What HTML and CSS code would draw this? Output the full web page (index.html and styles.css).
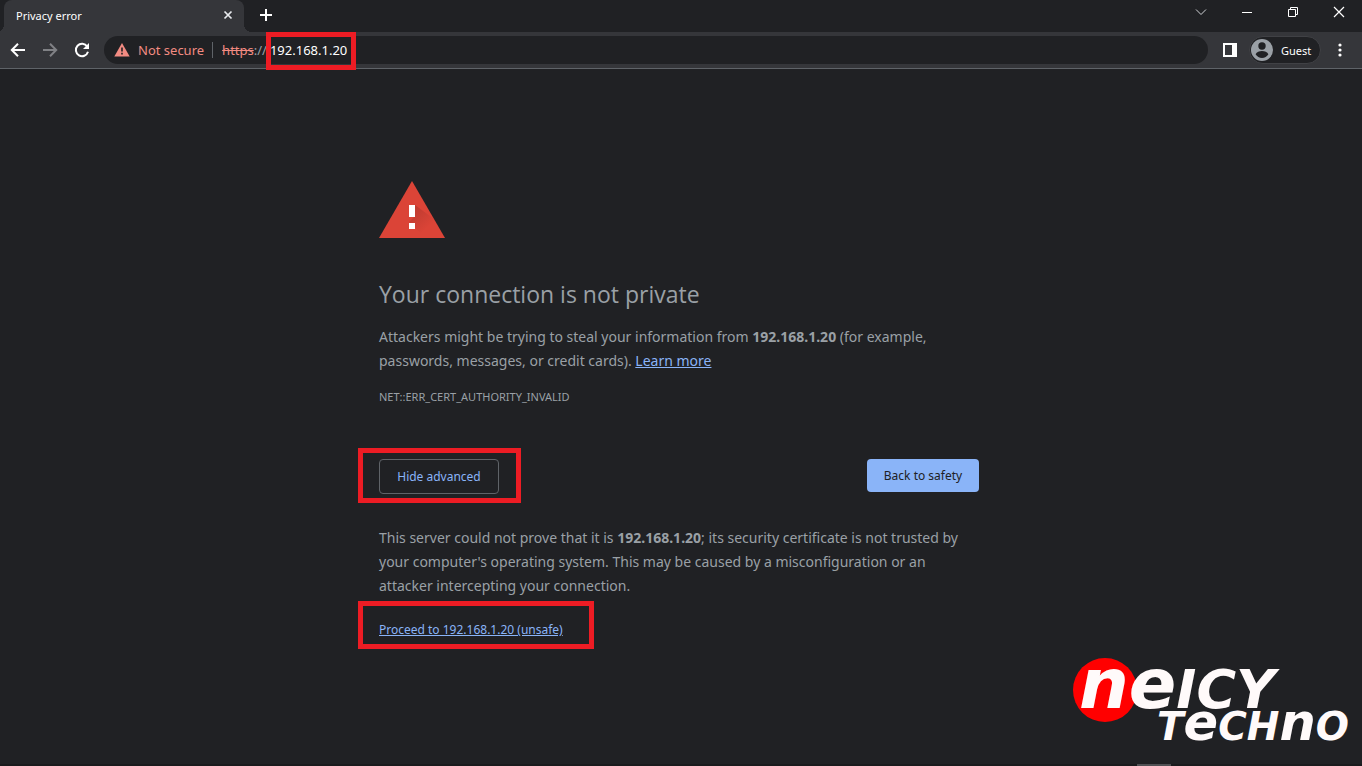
FILE: index.html
```html
<!DOCTYPE html>
<html lang="en">
<head>
  <meta charset="UTF-8">
  <title>Privacy error</title>
  <meta name="viewport" content="width=device-width, initial-scale=1.0">
  <link rel="stylesheet" href="styles.css">
</head>
<body>
  <header class="browser">
    <div class="tab-strip">
      <div class="tab">
        <span>Privacy error</span>
        <button type="button" class="icon-btn" aria-label="Close tab">
          <svg width="16" height="16" viewBox="0 0 16 16"><path d="M4.500 4.500l7 7M11.500 4.500l-7 7" stroke="#e8eaed" stroke-width="1.700"/></svg>
        </button>
      </div>
      <button type="button" class="icon-btn new-tab" aria-label="New tab">
        <svg width="16" height="16" viewBox="0 0 16 16"><path d="M8 2v12M2 8h12" stroke="#fff" stroke-width="2"/></svg>
      </button>
      <div class="window-controls">
        <button type="button" class="icon-btn" aria-label="Search tabs">
          <svg width="16" height="16" viewBox="0 0 16 16"><path d="M3 5.500l5 5 5-5" fill="none" stroke="#d0d2d6"/></svg>
        </button>
        <button type="button" class="icon-btn" aria-label="Minimize">
          <svg width="16" height="16" viewBox="0 0 16 16"><path d="M3 8.500h10" stroke="#fff"/></svg>
        </button>
        <button type="button" class="icon-btn" aria-label="Restore">
          <svg width="16" height="16" viewBox="0 0 16 16"><path d="M3.500 5.500h7v7h-7zM5.500 5.500v-2h7v7h-2" fill="none" stroke="#fff"/></svg>
        </button>
        <button type="button" class="icon-btn" aria-label="Close window">
          <svg width="16" height="16" viewBox="0 0 16 16"><path d="M3 3l10 10M13 3L3 13" stroke="#fff" stroke-width="1.200"/></svg>
        </button>
      </div>
    </div>

    <div class="toolbar">
      <nav class="nav-buttons">
        <button type="button" class="icon-btn" aria-label="Back">
          <svg width="16" height="16" viewBox="0 0 16 16"><path d="M15 8H2.500M8 1.800L1.800 8 8 14.200" fill="none" stroke="#fff" stroke-width="2"/></svg>
        </button>
        <button type="button" class="icon-btn" aria-label="Forward">
          <svg width="16" height="16" viewBox="0 0 16 16"><path d="M1 8h12.500M8 1.800L14.200 8 8 14.200" fill="none" stroke="#808185" stroke-width="2"/></svg>
        </button>
        <button type="button" class="icon-btn" aria-label="Reload">
          <svg width="16" height="16" viewBox="0 0 16 16"><path d="M13.200 4.500A6.200 6.200 0 1 0 14 9.800" fill="none" stroke="#fff" stroke-width="2"/><path d="M15 1v6H9z" fill="#fff"/></svg>
        </button>
      </nav>
      <div class="address-bar">
        <svg width="16" height="14" viewBox="0 0 16 14"><path d="M8 0l7.700 13.500H.3z" fill="#f28b82"/><path d="M8 4.500v4M8 9.800v1.700" stroke="#202124" stroke-width="1.600"/></svg>
        <span class="not-secure">Not secure</span>
        <label for="url" class="scheme"><s>https</s>://</label>
        <div class="marked mark-url">
          <input type="text" id="url" value="192.168.1.20">
        </div>
      </div>
      <button type="button" class="icon-btn" aria-label="Side panel">
        <svg width="16" height="16" viewBox="0 0 16 16"><path d="M1 1h14v14H1zM3 3v10h7V3z" fill="#fff" fill-rule="evenodd"/></svg>
      </button>
      <button type="button" class="profile">
        <svg width="22" height="22" viewBox="0 0 22 22"><circle cx="11" cy="11" r="11" fill="#9aa0a6"/><circle cx="11" cy="7" r="3.700" fill="#202124"/><path d="M4.600 15.200c1.200-2 3.600-3.100 6.400-3.100s5.200 1.100 6.400 3.100c-1.400 2.300-3.700 3.700-6.400 3.700s-5-1.400-6.400-3.700z" fill="#202124"/></svg>
        Guest
      </button>
      <button type="button" class="icon-btn" aria-label="Menu">
        <svg width="16" height="16" viewBox="0 0 16 16" fill="#fff"><circle cx="8" cy="3" r="1.600"/><circle cx="8" cy="8" r="1.600"/><circle cx="8" cy="13" r="1.600"/></svg>
      </button>
    </div>
  </header>

  <main>
    <div class="warning">
      <svg class="warning-icon" width="66" height="58" viewBox="0 0 66 58">
        <defs>
          <linearGradient id="shade" x1="0" y1="0" x2="1" y2="1">
            <stop offset="0" stop-color="#a8342b" stop-opacity=".7"/>
            <stop offset=".6" stop-color="#a8342b" stop-opacity="0"/>
          </linearGradient>
        </defs>
        <path d="M33 1l33 57H0z" fill="#db4437"/>
        <path d="M36 25l19 14 11 19H47L30 42l6-6z" fill="url(#shade)"/>
        <path d="M30 25h6v12h-6zM30 43h6v6h-6z" fill="#fff"/>
      </svg>
      <h1>Your connection is not private</h1>
      <p>Attackers might be trying to steal your information from <strong>192.168.1.20</strong> (for example, passwords, messages, or credit cards). <a href="#">Learn more</a></p>
      <div class="error-code">NET::ERR_CERT_AUTHORITY_INVALID</div>

      <div class="buttons">
        <div class="marked mark-advanced">
          <button type="button" class="btn btn-secondary">Hide advanced</button>
        </div>
        <button type="button" class="btn btn-primary">Back to safety</button>
      </div>

      <p>This server could not prove that it is <strong>192.168.1.20</strong>; its security certificate is not trusted by your computer's operating system. This may be caused by a misconfiguration or an attacker intercepting your connection.</p>
      <div class="marked mark-proceed">
        <a href="#" class="proceed">Proceed to 192.168.1.20 (unsafe)</a>
      </div>
    </div>
  </main>

  <div class="logo">
    <svg width="284" height="120" viewBox="0 -20 284 120">
      <circle cx="32" cy="35" r="32" fill="#f00"/>
      <g fill="#fffafa">
        <text x="6" y="53" class="logo-top"><tspan class="tall">ne</tspan>ICY</text>
        <text x="84" y="85" class="logo-bottom">T<tspan class="tall">e</tspan>CH<tspan class="tall">n</tspan>O</text>
      </g>
    </svg>
  </div>

  <footer class="taskbar"><span></span></footer>
</body>
</html>
```

FILE: styles.css
```css
* {
  box-sizing: border-box;
}

body {
  margin: 0;
  min-height: 100vh;
  display: flex;
  flex-direction: column;
  position: relative;
  background: #202124;
  color: #9aa0a6;
  font-family: "Noto Sans", "Open Sans", sans-serif;
  font-size: 13px;
}

button, input {
  font-family: inherit;
  border: none;
  background: none;
  padding: 0;
  cursor: pointer;
}

svg {
  display: block;
  flex: none;
}

/* Browser frame */
.tab-strip {
  display: flex;
  align-items: center;
  height: 32px;
  padding-left: 4px;
}
.tab {
  position: relative;
  display: flex;
  align-items: center;
  justify-content: space-between;
  width: 240px;
  height: 32px;
  padding: 0 8px 2px 12px;
  border-radius: 8px 8px 0 0;
  background: #35363a;
  color: #fff;
  font-size: 11px;
}
.tab::before,
.tab::after {
  content: "";
  position: absolute;
  bottom: 0;
  width: 8px;
  height: 8px;
}
.tab::before {
  right: 100%;
  background: radial-gradient(circle at 0 0, transparent 8px, #35363a 8px);
}
.tab::after {
  left: 100%;
  background: radial-gradient(circle at 100% 0, transparent 8px, #35363a 8px);
}
.new-tab {
  margin-left: 14px;
  padding-bottom: 2px;
}
.window-controls {
  display: flex;
  gap: 30px;
  margin-left: auto;
  padding: 0 15px 8px 0;
}
.toolbar {
  display: flex;
  align-items: center;
  height: 37px;
  padding: 0 14px 0 10px;
  background: #35363a;
  border-bottom: 1px solid #5f6368;
}
.nav-buttons {
  display: flex;
  gap: 16px;
  margin-right: 14px;
}
.address-bar {
  display: flex;
  align-items: center;
  flex: 1;
  height: 28px;
  margin-right: 14px;
  padding-left: 10px;
  border-radius: 14px;
  background: #202124;
}
.not-secure {
  margin: 0 9px 0 8px;
  padding-right: 8px;
  border-right: 1px solid #5f6368;
  line-height: 16px;
  color: #f28b82;
}
.scheme {
  margin-right: 3px;
  color: #9aa0a6;
}
.scheme s {
  color: #f28b82;
}
.address-bar input {
  display: block;
  width: 84px;
  height: 28px;
  color: #fff;
  font-size: 13px;
  outline: none;
}
.profile {
  display: flex;
  align-items: center;
  gap: 8px;
  min-width: 72px;
  height: 28px;
  margin: 0 11px;
  padding: 0 8px 0 1px;
  border: 1px solid #404145;
  border-radius: 14px;
  background: #202124;
  color: #fff;
  font-size: 11px;
}

/* Warning page */
main {
  flex: 1;
  padding: 111px 4px 32px 0;
}
.warning {
  max-width: 600px;
  margin: 0 auto;
}
h1 {
  margin: 40px 0 15px;
  font-family: "Open Sans", sans-serif;
  font-size: 23px;
  font-weight: 400;
  line-height: 32px;
}
p {
  margin: 0;
  font-size: 14px;
  line-height: 24px;
}
a {
  color: #8ab4f8;
}
.error-code {
  margin-top: 14px;
  font-size: 11px;
  line-height: 20px;
}
.buttons {
  display: flex;
  justify-content: space-between;
  align-items: flex-start;
  margin: 52px 0 32px;
}
.btn {
  height: 33px;
  border-radius: 4px;
  font-size: 12px;
}
.btn-secondary {
  width: 120px;
  height: 35px;
  border: 1px solid #5f6368;
  color: #8ab4f8;
}
.btn-primary {
  width: 112px;
  background: #8ab4f8;
  color: #202124;
}
.proceed {
  font-size: 12px;
  line-height: 20px;
}

/* Red frames around the steps */
.marked {
  position: relative;
}
.marked::after {
  content: "";
  position: absolute;
  border: 5px solid #ed1c24;
  pointer-events: none;
}
.mark-url::after {
  inset: -4px -2px -6px -4px;
}
.mark-advanced::after {
  inset: -11px -22px -9px -21px;
}
.mark-proceed {
  width: fit-content;
  margin-top: 22px;
}
.mark-proceed::after {
  inset: -19px -31px -9px -21px;
}

.logo {
  position: absolute;
  right: 5px;
  bottom: 11px;
}
.logo text {
  font-family: "DejaVu Sans", sans-serif;
  font-weight: 700;
  font-style: italic;
}
.logo-top {
  font-size: 54px;
}
.logo-top .tall {
  font-size: 70px;
}
.logo-bottom {
  font-size: 39px;
}
.logo-bottom .tall {
  font-size: 51px;
}

.taskbar {
  height: 2px;
  padding: 0 191px;
  background: #1a1b1d;
}
.taskbar span {
  display: block;
  width: 34px;
  height: 2px;
  margin-left: auto;
  background: #505154;
}
```
